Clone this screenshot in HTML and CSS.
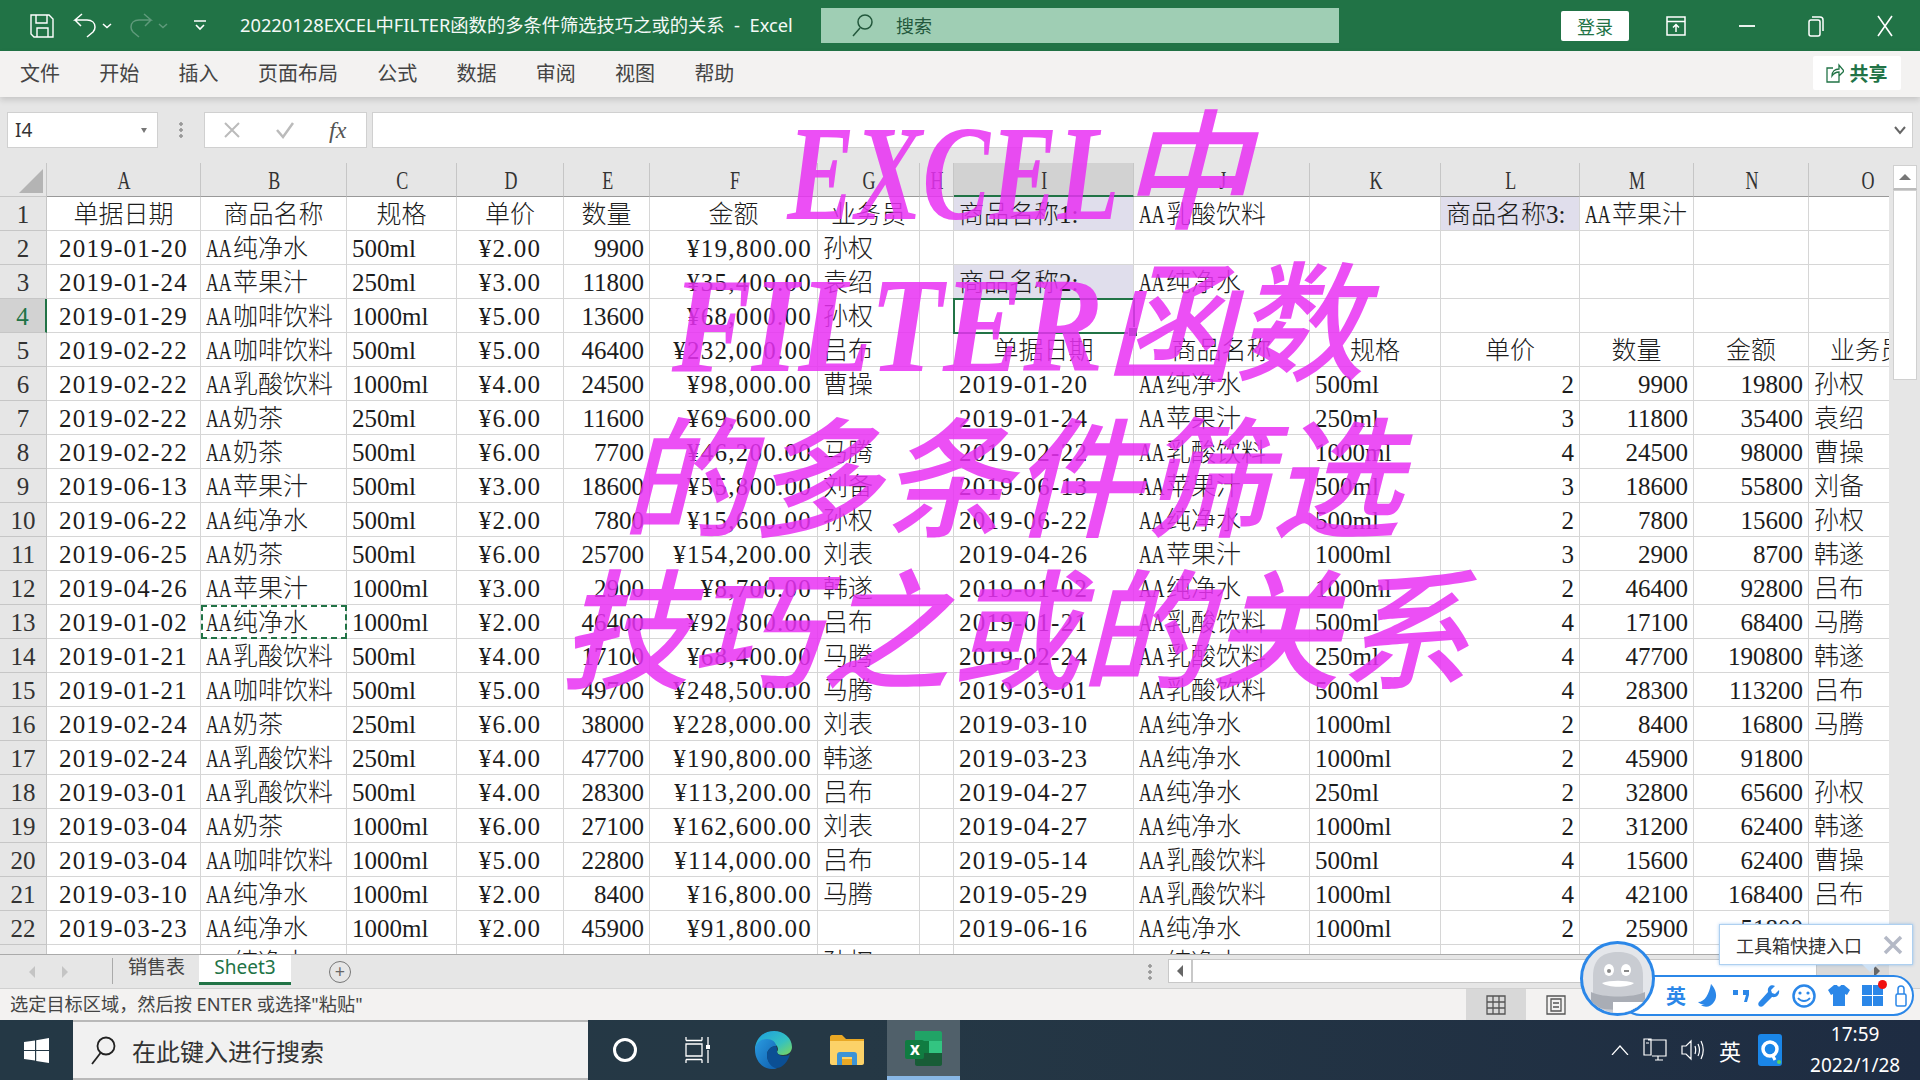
FILE: index.html
```html
<!DOCTYPE html>
<html lang="zh-CN">

<head>
    <meta charset="UTF-8">
    <title>20220128EXCEL中FILTER函数的多条件筛选技巧之或的关系 - Excel</title>
    <link rel="stylesheet" href="styles.css">
</head>

<body>

    <!-- Title bar -->
    <header class="titlebar">
        <div class="quick-access">
            <svg class="qa-save" width="24" height="24" viewBox="0 0 24 24" fill="none" stroke="#fff" stroke-width="1.4"><path d="M1 1h18l4 4v18H4l-3-3z"/><path d="M6 1v8h11V1M7 23v-9h11v9"/></svg>
            <svg class="qa-undo" width="24" height="25" viewBox="0 0 24 25" fill="none" stroke="#fff" stroke-width="1.5"><path d="M9 1 2 7h12c5 0 8 3 8 7 0 2-1 4-2 5l-6 5M2 7l6 6"/></svg>
            <svg class="qa-chev" width="10" height="6" viewBox="0 0 10 6" fill="none" stroke="#fff" stroke-width="1.5"><path d="M1 1l4 3.500 4-3.500"/></svg>
            <svg class="qa-redo" width="24" height="25" viewBox="0 0 24 25" fill="none" stroke="#5f9a7b" stroke-width="1.500"><path d="M15 1l7 6H10C5 7 2 10 2 14c0 2 1 4 2 5l6 5M22 7l-6 6"/></svg>
            <svg class="qa-chev" width="10" height="6" viewBox="0 0 10 6" fill="none" stroke="#5f9a7b" stroke-width="1.5"><path d="M1 1l4 3.500 4-3.500"/></svg>
            <svg class="qa-more" width="14" height="12" viewBox="0 0 14 12" fill="none" stroke="#fff" stroke-width="1.6"><path d="M1 1h12M3 5l4 4 4-4"/></svg>
        </div>
        <div class="doc-title">20220128EXCEL中FILTER函数的多条件筛选技巧之或的关系&nbsp; -&nbsp; Excel</div>
        <div class="search-box">
            <svg width="22" height="24" viewBox="0 0 22 24" fill="none" stroke="#23583c" stroke-width="1.5"><circle cx="14" cy="9" r="7"/><path d="M9 15 2 23"/></svg>
            <span>搜索</span>
        </div>
        <button class="login-btn">登录</button>
        <div class="window-btns">
            <svg width="20" height="20" viewBox="0 0 20 20" fill="none" stroke="#fff" stroke-width="1.500"><path d="M1 1h18v18H1zM1 5.500h18M10 16V9M7 11.500l3-3 3 3"/></svg>
            <svg width="16" height="20" viewBox="0 0 16 20" fill="none" stroke="#fff" stroke-width="1.800"><path d="M0 10h16"/></svg>
            <svg width="16" height="22" viewBox="0 0 16 22" fill="none" stroke="#fff" stroke-width="1.500"><rect x="1" y="5" width="11" height="16" rx="2"/><path d="M4 2h8c2 0 3 1 3 3v11"/></svg>
            <svg width="16" height="22" viewBox="0 0 16 22" fill="none" stroke="#fff" stroke-width="1.600"><path d="M1 1l14 20M15 1 1 21"/></svg>
        </div>
    </header>

    <!-- Ribbon tabs -->
    <nav class="ribbon">
        <a>文件</a>
        <a>开始</a>
        <a>插入</a>
        <a>页面布局</a>
        <a>公式</a>
        <a>数据</a>
        <a>审阅</a>
        <a>视图</a>
        <a>帮助</a>
        <button class="share-btn">
            <svg width="18" height="20" viewBox="0 0 18 20" fill="none" stroke="#217346" stroke-width="1.300"><path d="M7 5H1v14h12v-6M6 13c0-5 3-7 7-7V2l5 6-5 5V9c-3 0-5 1-7 4z"/></svg>
            共享
        </button>
    </nav>

    <!-- Formula bar -->
    <div class="formula-bar">
        <div class="name-box">I4<span class="name-arrow"></span></div>
        <div class="grip"></div>
        <div class="fx-box">
            <svg width="18" height="18" viewBox="0 0 18 18" fill="none" stroke="#bbb" stroke-width="2"><path d="M2 2l14 14M16 2 2 16"/></svg>
            <svg width="20" height="18" viewBox="0 0 20 18" fill="none" stroke="#bbb" stroke-width="2.500"><path d="M2 9l6 7L18 2"/></svg>
            <span class="fx-label">fx</span>
        </div>
        <div class="formula-input">
            <svg width="12" height="10" viewBox="0 0 12 10" fill="none" stroke="#666" stroke-width="2"><path d="M1 2l5 6 5-6"/></svg>
        </div>
    </div>

    <!-- Sheet grid -->
    <main class="sheet">
        <div class="grid-wrap">
            <table class="grid">
                <colgroup>
                    <col class="w-head"><col class="w-a"><col class="w-b"><col class="w-c"><col class="w-d"><col class="w-e"><col class="w-f"><col class="w-g"><col class="w-h"><col class="w-i"><col class="w-j"><col class="w-k"><col class="w-l"><col class="w-m"><col class="w-n"><col class="w-o">
                </colgroup>
                <thead id="gridHead"></thead>
                <tbody id="gridBody"></tbody>
            </table>
        </div>
        <div class="v-scroll">
            <div class="v-up"><span></span></div>
            <div class="v-thumb"></div>
        </div>
    </main>

    <!-- Sheet tabs and horizontal scrollbar -->
    <div class="tabs-bar">
        <span class="tab-nav tab-nav-left"></span>
        <span class="tab-nav tab-nav-right"></span>
        <span class="tab-sep"></span>
        <span class="tab">销售表</span>
        <span class="tab tab-active">Sheet3</span>
        <span class="tab-add">+</span>
        <span class="h-grip"></span>
        <div class="h-scroll">
            <span class="h-left"><i></i></span>
            <span class="h-thumb"></span>
            <span class="h-right"><i></i></span>
        </div>
    </div>

    <!-- Status bar -->
    <div class="status-bar">
        <span class="status-text">选定目标区域，然后按 ENTER 或选择"粘贴"</span>
        <div class="view-btns">
            <span class="view-btn view-active">
                <svg width="20" height="20" viewBox="0 0 20 20" fill="none" stroke="#555" stroke-width="1.300"><path d="M1 1h18v18H1zM7 1v18M13 1v18M1 7h18M1 13h18"/></svg>
            </span>
            <span class="view-btn">
                <svg width="20" height="20" viewBox="0 0 20 20" fill="none" stroke="#555" stroke-width="1.300"><path d="M1 1h18v18H1zM5 4h10v12H5zM7 8h6M7 12h6"/></svg>
            </span>
        </div>
    </div>

    <!-- Taskbar -->
    <footer class="taskbar">
        <div class="start-btn">
            <svg width="25" height="25" viewBox="0 0 25 25" fill="#fff"><path d="M0 4l11-1.500V12H0zM12.200 2.300 25 0v12H12.200zM0 13h11v9.500L0 21zM12.200 13H25v12l-12.800-2z"/></svg>
        </div>
        <div class="task-search">
            <svg width="26" height="30" viewBox="0 0 26 30" fill="none" stroke="#222" stroke-width="1.800"><circle cx="16" cy="11" r="8.500"/><path d="M10.500 18 2 29"/></svg>
            <span>在此键入进行搜索</span>
        </div>
        <div class="task-icons">
            <span class="task-icon">
                <svg width="26" height="26" viewBox="0 0 26 26" fill="none" stroke="#fff" stroke-width="3"><circle cx="13" cy="13" r="10.500"/></svg>
            </span>
            <span class="task-icon">
                <svg width="28" height="26" viewBox="0 0 28 26" fill="none" stroke="#fff" stroke-width="1.300"><path d="M1 3.500h16M1 0v3.500M17 0v3.500M1 7h16v12H1zM1 22.500h16M1 26v-3.500M17 26v-3.500M23 0v9M23 13v13"/><rect x="21" y="8" width="4" height="4" fill="#fff" stroke="none"/></svg>
            </span>
            <span class="task-icon">
                <svg width="38" height="38" viewBox="0 0 38 38">
                    <defs>
                        <linearGradient id="edgeTop" x1="0" y1="0" x2="1" y2="1"><stop offset="0" stop-color="#1b9de2"/><stop offset=".6" stop-color="#35c1c0"/><stop offset="1" stop-color="#7fd858"/></linearGradient>
                        <linearGradient id="edgeLow" x1="0" y1="0" x2="1" y2="1"><stop offset="0" stop-color="#2a9be0"/><stop offset="1" stop-color="#0f5fae"/></linearGradient>
                    </defs>
                    <path d="M1 19C1 8 9 0 20 0c10 0 18 7 18 16 0 5-4 8-9 8-4 0-6-1-6-3 0-1 1-1 1-3 0-3-3-6-8-6-9 0-15 7-15 7z" fill="url(#edgeTop)"/>
                    <path d="M1 19c0-6 5-11 12-11 5 0 9 3 9 7-5 0-9 4-9 9 0 6 4 11 10 13-1 1-3 1-5 1C8 38 1 29 1 19z" fill="url(#edgeLow)"/>
                    <path d="M13 24c0-5 4-9 9-9 1 2 1 3 1 5 0 3 3 5 7 5 3 0 5-1 6-2-2 8-8 15-15 14C16 35 13 30 13 24z" fill="#0b4f94"/>
                </svg>
            </span>
            <span class="task-icon">
                <svg width="34" height="30" viewBox="0 0 34 30">
                    <path d="M0 2c0-1 1-2 2-2h10l4 4h18v8H0z" fill="#e9a825"/>
                    <path d="M0 6h34v22c0 1-1 2-2 2H2c-1 0-2-1-2-2z" fill="#fcd268"/>
                    <path d="M7 30v-10c0-2 1-3 3-3h14c2 0 3 1 3 3v10h-5v-8H12v8z" fill="#3c93d6"/>
                    <rect x="12" y="24" width="10" height="6" fill="#e9a825"/>
                </svg>
            </span>
            <span class="task-icon task-icon-open">
                <svg width="37" height="35" viewBox="0 0 37 35">
                    <path d="M10 0h25c1 0 2 1 2 2v8H10z" fill="#21a366"/>
                    <path d="M10 10h14v12H10z" fill="#107c41"/>
                    <path d="M24 10h13v12H24z" fill="#33c481"/>
                    <path d="M10 22h27v11c0 1-1 2-2 2H12c-1 0-2-1-2-2z" fill="#185c37"/>
                    <rect y="9" width="19" height="19" rx="2" fill="#107c41"/>
                    <text x="5" y="24" class="xl-letter">x</text>
                </svg>
            </span>
        </div>
        <div class="tray">
            <svg width="18" height="10" viewBox="0 0 18 10" fill="none" stroke="#fff" stroke-width="1.200"><path d="M1 10 9 1l8 9"/></svg>
            <svg width="24" height="24" viewBox="0 0 24 24" fill="none" stroke="#fff" stroke-width="1.200"><path d="M5 2h18v16H9M1 1h7v16H1zM3 5h3M12 22h8M15 18v4"/></svg>
            <svg width="24" height="24" viewBox="0 0 24 24" fill="none" stroke="#fff" stroke-width="1.200"><path d="M1 8h4l5-5v18l-5-5H1zM14 8c1 3 1 5 0 8M17 6c2 4 2 8 0 12M20 3c3 6 3 12 0 18"/></svg>
            <span class="tray-lang">英</span>
            <svg class="tray-q" width="24" height="32" viewBox="0 0 24 32"><rect width="24" height="32" rx="3" fill="#1a86e8"/><circle cx="12" cy="15" r="7" fill="none" stroke="#fff" stroke-width="3.500"/><path d="M14 20l3 6" stroke="#fff" stroke-width="3"/><circle cx="21" cy="28" r="2" fill="#5fd35f"/></svg>
            <div class="clock"><span>17:59</span><span>2022/1/28</span></div>
        </div>
    </footer>

    <!-- Cover caption over the sheet -->
    <div class="banner">
        <div class="banner-line line-one"><span class="latin latin-excel">EXCEL</span>中</div>
        <div class="banner-line line-two"><span class="latin latin-filter">FILTER</span>函数</div>
        <div class="banner-line line-three">的多条件筛选</div>
        <div class="banner-line line-four">技巧之或的关系</div>
    </div>

    <!-- Input method toolbar -->
    <div class="ime-tip">
        <span>工具箱快捷入口</span>
        <svg width="20" height="20" viewBox="0 0 20 20" fill="none" stroke="#b4b9c6" stroke-width="3.500"><path d="M2 2l16 16M18 2 2 18"/></svg>
        <i class="ime-tip-arrow"></i>
    </div>
    <div class="ime-bar">
        <b>英</b>
        <svg width="20" height="24" viewBox="0 0 20 24" fill="#2b87e8"><path d="M13 0c3 6 1 18-5 20-3 1-6 0-8-2 7 0 11-8 13-18z"/><path d="M13 0c5 5 7 13 3 18-3 5-9 6-13 3 7 0 12-10 10-21z"/></svg>
        <svg class="ime-quote" width="16" height="14" viewBox="0 0 16 14" fill="#2b87e8"><rect y="1" width="5" height="5"/><path d="M10 1h6v5l-2 7h-3l2-7h-3z"/></svg>
        <svg width="22" height="22" viewBox="0 0 22 22" fill="#2b87e8"><path d="M21 5l-4 4-3-1-1-3 4-4c-4-2-8 1-7 6L1 17c-1 1-1 3 0 4s3 1 4 0l9-9c5 1 8-3 7-7z"/></svg>
        <svg width="24" height="24" viewBox="0 0 24 24" fill="none" stroke="#2b87e8" stroke-width="2.500"><circle cx="12" cy="12" r="10.500"/><path d="M6 14c3 4 9 4 12 0" stroke-width="1.800"/><circle cx="8" cy="9" r="1.600" fill="#2b87e8" stroke="none"/><circle cx="16" cy="9" r="1.600" fill="#2b87e8" stroke="none"/></svg>
        <svg width="22" height="21" viewBox="0 0 22 21" fill="#2b87e8"><path d="M6 0h3c1 2 3 2 4 0h3l6 5-3 5-2-1v12H5V9l-2 1-3-5z"/></svg>
        <svg width="21" height="21" viewBox="0 0 21 21" fill="#2b87e8"><path d="M0 0h10v10H0zM11 0h10v10H11zM0 11h10v10H0zM11 11h10v10H11z"/></svg>
        <svg width="12" height="22" viewBox="0 0 12 22" fill="none" stroke="#2b87e8" stroke-width="1.500"><rect x="1" y="9" width="10" height="12" rx="1.500"/><path d="M3 9V4c0-4 6-4 6 0v5"/></svg>
        <i class="ime-dot"></i>
    </div>
    <div class="ime-avatar">
        <svg width="70" height="70" viewBox="0 0 70 70">
            <path d="M10 70V32C10 14 21 8 35 8s25 6 25 24v38z" fill="#c9ccd2"/>
            <path d="M8 48c12 6 42 6 54 0v14c-12 5-42 5-54 0z" fill="#a9adb5"/>
            <rect x="30" y="58" width="30" height="12" fill="#fff"/>
            <ellipse cx="26" cy="26" rx="5" ry="6" fill="#fff"/>
            <ellipse cx="43" cy="26" rx="5" ry="6" fill="#fff"/>
            <circle cx="26" cy="27" r="2" fill="#888"/>
            <path d="M41 27h5" stroke="#888" stroke-width="2"/>
            <path d="M19 39c8-3 24-3 32 0-6 5-26 5-32 0z" fill="#fff"/>
        </svg>
    </div>

    <script>
        // Sheet contents, one row per line, columns A to O split by "|"
        const sheetRows = [
            "单据日期|商品名称|规格|单价|数量|金额|业务员||商品名称1:|AA乳酸饮料||商品名称3:|AA苹果汁||",
            "2019-01-20|AA纯净水|500ml|¥2.00|9900|¥19,800.00|孙权||||||||",
            "2019-01-24|AA苹果汁|250ml|¥3.00|11800|¥35,400.00|袁绍||商品名称2:|AA纯净水|||||",
            "2019-01-29|AA咖啡饮料|1000ml|¥5.00|13600|¥68,000.00|孙权||||||||",
            "2019-02-22|AA咖啡饮料|500ml|¥5.00|46400|¥232,000.00|吕布||单据日期|商品名称|规格|单价|数量|金额|业务员",
            "2019-02-22|AA乳酸饮料|1000ml|¥4.00|24500|¥98,000.00|曹操||2019-01-20|AA纯净水|500ml|2|9900|19800|孙权",
            "2019-02-22|AA奶茶|250ml|¥6.00|11600|¥69,600.00|||2019-01-24|AA苹果汁|250ml|3|11800|35400|袁绍",
            "2019-02-22|AA奶茶|500ml|¥6.00|7700|¥46,200.00|马腾||2019-02-22|AA乳酸饮料|1000ml|4|24500|98000|曹操",
            "2019-06-13|AA苹果汁|500ml|¥3.00|18600|¥55,800.00|刘备||2019-06-13|AA苹果汁|500ml|3|18600|55800|刘备",
            "2019-06-22|AA纯净水|500ml|¥2.00|7800|¥15,600.00|孙权||2019-06-22|AA纯净水|500ml|2|7800|15600|孙权",
            "2019-06-25|AA奶茶|500ml|¥6.00|25700|¥154,200.00|刘表||2019-04-26|AA苹果汁|1000ml|3|2900|8700|韩遂",
            "2019-04-26|AA苹果汁|1000ml|¥3.00|2900|¥8,700.00|韩遂||2019-01-02|AA纯净水|1000ml|2|46400|92800|吕布",
            "2019-01-02|AA纯净水|1000ml|¥2.00|46400|¥92,800.00|吕布||2019-01-21|AA乳酸饮料|500ml|4|17100|68400|马腾",
            "2019-01-21|AA乳酸饮料|500ml|¥4.00|17100|¥68,400.00|马腾||2019-02-24|AA乳酸饮料|250ml|4|47700|190800|韩遂",
            "2019-01-21|AA咖啡饮料|500ml|¥5.00|49700|¥248,500.00|马腾||2019-03-01|AA乳酸饮料|500ml|4|28300|113200|吕布",
            "2019-02-24|AA奶茶|250ml|¥6.00|38000|¥228,000.00|刘表||2019-03-10|AA纯净水|1000ml|2|8400|16800|马腾",
            "2019-02-24|AA乳酸饮料|250ml|¥4.00|47700|¥190,800.00|韩遂||2019-03-23|AA纯净水|1000ml|2|45900|91800|",
            "2019-03-01|AA乳酸饮料|500ml|¥4.00|28300|¥113,200.00|吕布||2019-04-27|AA纯净水|250ml|2|32800|65600|孙权",
            "2019-03-04|AA奶茶|1000ml|¥6.00|27100|¥162,600.00|刘表||2019-04-27|AA纯净水|1000ml|2|31200|62400|韩遂",
            "2019-03-04|AA咖啡饮料|1000ml|¥5.00|22800|¥114,000.00|吕布||2019-05-14|AA乳酸饮料|500ml|4|15600|62400|曹操",
            "2019-03-10|AA纯净水|1000ml|¥2.00|8400|¥16,800.00|马腾||2019-05-29|AA乳酸饮料|1000ml|4|42100|168400|吕布",
            "2019-03-23|AA纯净水|1000ml|¥2.00|45900|¥91,800.00|||2019-06-16|AA纯净水|1000ml|2|25900|51800|",
            "2019-04-27|AA纯净水|250ml|¥2.00|32800|¥65,600.00|孙权||2019-06-27|AA纯净水|250ml|2|32800|65600|孙权"
        ];

        // Default alignment of each column
        const columnAlign = ['center', 'left', 'left', 'center', 'right', 'right', 'left', 'left',
            'left', 'left', 'left', 'right', 'right', 'right', 'left'];
        const letters = 'ABCDEFGHIJKLMNO';

        // Column headers
        const headRow = document.createElement('tr');
        headRow.appendChild(document.createElement('th')).className = 'corner';
        for (const letter of letters) {
            const th = document.createElement('th');
            th.className = letter === 'I' ? 'col-head active-col' : 'col-head';
            const span = document.createElement('span');
            span.textContent = letter;
            th.appendChild(span);
            headRow.appendChild(th);
        }
        document.getElementById('gridHead').appendChild(headRow);

        // Fill a cell, narrowing the "AA" prefix to the width of one full-width character
        function fillCell(td, text) {
            if (text.startsWith('AA')) {
                const prefix = document.createElement('span');
                prefix.className = 'prefix';
                prefix.textContent = 'AA';
                td.appendChild(prefix);
                td.appendChild(document.createTextNode(text.slice(2)));
            } else {
                td.textContent = text;
            }
            if (/^\d{4}-|^¥/.test(text)) td.classList.add('spaced');
        }

        const gridBody = document.getElementById('gridBody');
        sheetRows.forEach((line, r) => {
            const row = document.createElement('tr');
            const number = r + 1;

            const head = document.createElement('th');
            head.className = number === 4 ? 'row-head active-row' : 'row-head';
            head.textContent = number;
            row.appendChild(head);

            line.split('|').forEach((text, c) => {
                const td = document.createElement('td');
                td.className = columnAlign[c];
                // Heading rows are centred, the criteria block in row 1 stays left
                if ((number === 1 && c < 7) || (number === 5 && c > 7)) td.className = 'center';
                if (number === 1 && c > 7) td.className = 'left';
                if (text.startsWith('商品名称') && text.length > 4) td.classList.add('label');
                fillCell(td, text);
                if (number === 4 && c === 8) td.classList.add('selected');
                if (number === 13 && c === 1) td.classList.add('copied');
                row.appendChild(td);
            });
            gridBody.appendChild(row);
        });
    </script>

</body>

</html>
```

FILE: styles.css
```css
/* General Reset */
* {
    margin: 0;
    padding: 0;
    box-sizing: border-box;
}

body {
    position: relative;
    width: 1920px;
    height: 1080px;
    overflow: hidden;
    display: flex;
    flex-direction: column;
    font-family: "Noto Sans", "Noto Sans CJK SC", sans-serif;
    background: #e6e6e6;
    color: #333;
}

/* Title bar */
.titlebar {
    height: 51px;
    flex: none;
    display: flex;
    align-items: center;
    background: #217346;
    color: #fff;
}

.quick-access {
    width: 240px;
    flex: none;
    display: flex;
    align-items: center;
    padding-left: 30px;
}

.qa-undo { margin-left: 19px; }
.qa-chev { margin-left: 5px; }
.qa-redo { margin-left: 17px; }
.qa-more { margin-left: 25px; }

.doc-title {
    width: 581px;
    flex: none;
    padding-bottom: 4px;
    font-size: 18.300px;
    white-space: nowrap;
    color: #f4f9f6;
}

.search-box {
    width: 518px;
    height: 35px;
    flex: none;
    display: flex;
    align-items: center;
    gap: 23px;
    padding: 0 0 2px 30px;
    background: #9fceb4;
    color: #23583c;
    font-size: 18px;
}

.login-btn {
    width: 68px;
    height: 30px;
    margin-left: 222px;
    flex: none;
    border: none;
    border-radius: 2px;
    background: #fff;
    color: #217346;
    font-family: inherit;
    font-size: 18px;
}

.window-btns {
    flex: 1;
    display: flex;
    align-items: center;
    justify-content: space-between;
    padding: 0 27px 0 37px;
}

/* Ribbon tabs */
.ribbon {
    height: 46px;
    flex: none;
    position: relative;
    z-index: 1;
    display: flex;
    align-items: center;
    gap: 39.300px;
    padding: 0 0 4px 20px;
    background: #f3f2f1;
    box-shadow: 0 3px 6px rgba(0, 0, 0, 0.14);
    font-size: 20px;
    color: #444;
}

.share-btn {
    position: absolute;
    top: 5px;
    right: 19px;
    width: 88px;
    height: 34px;
    display: flex;
    align-items: center;
    justify-content: center;
    gap: 5px;
    border: none;
    border-radius: 2px;
    background: #fff;
    color: #217346;
    font-family: inherit;
    font-size: 19px;
    font-weight: 700;
}

/* Formula bar */
.formula-bar {
    height: 66px;
    flex: none;
    display: flex;
    align-items: flex-start;
    padding: 15px 7px 0 7px;
    background: #e6e6e6;
}

.name-box,
.fx-box,
.formula-input {
    height: 36px;
    background: #fff;
    border: 1px solid #d0d0d0;
}

.name-box {
    position: relative;
    width: 151px;
    padding-left: 7px;
    font-size: 19px;
    line-height: 34px;
}

.name-arrow {
    position: absolute;
    right: 10px;
    top: 15px;
    border-top: 5px solid #777;
    border-left: 3.500px solid transparent;
    border-right: 3.500px solid transparent;
}

.grip {
    width: 46px;
    height: 18px;
    margin-top: 9px;
    background: radial-gradient(circle, #999 1.500px, transparent 2px) center top / 4px 6px repeat-y;
}

.fx-box {
    width: 163px;
    display: flex;
    align-items: center;
    gap: 34px;
    padding-left: 18px;
}

.fx-label {
    font-family: "Liberation Serif", serif;
    font-style: italic;
    font-size: 24px;
    color: #555;
}

.formula-input {
    flex: 1;
    margin-left: 5px;
    display: flex;
    align-items: center;
    justify-content: flex-end;
    padding-right: 6px;
}

/* Sheet grid */
.sheet {
    flex: 1;
    min-height: 0;
    display: flex;
}

.grid-wrap {
    width: 1889px;
    flex: none;
    overflow: hidden;
    position: relative;
    border-bottom: 1px solid #aaa;
    background: #fff;
}

.grid {
    width: 1927px;
    table-layout: fixed;
    border-collapse: separate;
    border-spacing: 0;
    font-family: "Liberation Serif", "Noto Sans CJK SC", serif;
    font-size: 25px;
    font-weight: 300;
    color: #1c1c1c;
}

.w-head { width: 47px; }
.w-a { width: 154px; }
.w-b { width: 146px; }
.w-c { width: 110px; }
.w-d { width: 107px; }
.w-e { width: 86px; }
.w-f { width: 168px; }
.w-g { width: 102px; }
.w-h { width: 34px; }
.w-i { width: 180px; }
.w-j { width: 176px; }
.w-k { width: 131px; }
.w-l { width: 139px; }
.w-m { width: 114px; }
.w-n { width: 115px; }
.w-o { width: 118px; }

.grid tr {
    height: 34px;
}

.grid th {
    font-weight: 400;
    background: #e6e6e6;
    color: #333;
    border-right: 1px solid #c6c6c6;
    border-bottom: 1px solid #c6c6c6;
}

.grid td {
    height: 34px;
    padding: 3px 5px 0;
    overflow: hidden;
    white-space: nowrap;
    line-height: 30px;
    border-right: 1px solid #d6d6d6;
    border-bottom: 1px solid #d6d6d6;
}

.corner {
    position: relative;
}

.corner::after {
    content: "";
    position: absolute;
    right: 3px;
    bottom: 3px;
    border-left: 24px solid transparent;
    border-bottom: 24px solid #b4b4b4;
}

.col-head {
    height: 34px;
    padding: 3px 0 0 2px;
    border-bottom-color: #999 !important;
}

.col-head span {
    display: inline-block;
    transform: scaleX(0.72);
}

.active-col {
    background: #d2d2d2 !important;
    border-bottom: 2px solid #217346 !important;
}

.row-head {
    padding-top: 3px;
    line-height: 30px;
}

.active-row {
    background: #d2d2d2 !important;
    color: #217346 !important;
    border-right: 2px solid #217346 !important;
}

.left { text-align: left; }
.center { text-align: center; }
.right { text-align: right; }

.grid td.spaced {
    letter-spacing: 1.250px;
}

.prefix {
    display: inline-block;
    width: 25px;
    transform: scaleX(0.7);
    transform-origin: left center;
    margin-right: 2px;
}

.label {
    background: #e0deec;
}

.grid td.selected {
    position: relative;
    overflow: visible;
    outline: 2px solid #217346;
    outline-offset: -1px;
}

td.selected::after {
    content: "";
    position: absolute;
    right: -5px;
    bottom: -5px;
    width: 8px;
    height: 8px;
    background: #217346;
    border: 1px solid #fff;
}

td.copied {
    outline: 2px dashed #217346;
    outline-offset: -2px;
}

/* Vertical scrollbar */
.v-scroll {
    flex: 1;
    padding: 2px 3px 0 4px;
    background: #e6e6e6;
}

.v-up {
    height: 25px;
    display: flex;
    align-items: center;
    justify-content: center;
    background: #fff;
    border: 1px solid #d0d0d0;
    border-bottom: 2px solid #bbb;
}

.v-up span {
    border-bottom: 6px solid #777;
    border-left: 6px solid transparent;
    border-right: 6px solid transparent;
}

.v-thumb {
    height: 190px;
    background: #fff;
    border: 1px solid #d0d0d0;
}

/* Sheet tabs */
.tabs-bar {
    height: 34px;
    flex: none;
    display: flex;
    align-items: flex-start;
    background: #e6e6e6;
    border-bottom: 1px solid #d0d0d0;
}

.tab-nav {
    width: 0;
    height: 0;
    margin-top: 11px;
    border-top: 6px solid transparent;
    border-bottom: 6px solid transparent;
}

.tab-nav-left {
    margin-left: 29px;
    border-right: 6px solid #c4c4c4;
}

.tab-nav-right {
    margin-left: 27px;
    border-left: 6px solid #c4c4c4;
}

.tab-sep {
    width: 1px;
    height: 26px;
    margin: 3px 12px 0 44px;
    background: #aaa;
}

.tab {
    height: 30px;
    padding: 0 14px 0 3px;
    font-size: 19px;
    line-height: 24px;
    color: #444;
}

.tab-active {
    width: 92px;
    padding: 0;
    text-align: center;
    background: #fff;
    color: #217346;
    border-bottom: 3px solid #217346;
}

.tab-add {
    width: 22px;
    height: 22px;
    margin: 6px 0 0 38px;
    border: 1.500px solid #777;
    border-radius: 50%;
    text-align: center;
    font-size: 18px;
    line-height: 18px;
    color: #666;
}

.h-grip {
    width: 6px;
    height: 18px;
    margin: 8px 0 0 796px;
    background: radial-gradient(circle, #999 1.500px, transparent 2px) center top / 4px 6px repeat-y;
}

.h-scroll {
    width: 721px;
    height: 24px;
    margin: 4px 0 0 15px;
    display: flex;
    background: #d9d9d9;
}

.h-left,
.h-right {
    width: 24px;
    display: flex;
    align-items: center;
    justify-content: center;
}

.h-left {
    background: #fff;
    border: 1px solid #c8c8c8;
}

.h-left i {
    border-right: 6px solid #666;
    border-top: 6px solid transparent;
    border-bottom: 6px solid transparent;
}

.h-thumb {
    width: 628px;
    background: #fff;
    border: 1px solid #c8c8c8;
}

.h-right {
    margin-left: 48px;
}

.h-right i {
    border-left: 6px solid #666;
    border-top: 6px solid transparent;
    border-bottom: 6px solid transparent;
}

/* Status bar */
.status-bar {
    height: 31px;
    flex: none;
    display: flex;
    align-items: center;
    justify-content: space-between;
    padding-left: 10px;
    background: #f3f2f1;
    font-size: 18.200px;
    color: #444;
}

.status-text {
    padding-bottom: 4px;
}

.view-btns {
    display: flex;
    margin-right: 334px;
}

.view-btn {
    width: 60px;
    height: 31px;
    display: flex;
    align-items: center;
    justify-content: center;
}

.view-active {
    background: #d8d8d8;
}

/* Taskbar */
.taskbar {
    height: 60px;
    flex: none;
    display: flex;
    align-items: center;
    background: linear-gradient(90deg, #243845 0%, #253845 45%, #1e2c42 100%);
    color: #fff;
}

.start-btn {
    width: 73px;
    display: flex;
    justify-content: center;
}

.task-search {
    width: 515px;
    height: 60px;
    display: flex;
    align-items: center;
    gap: 16px;
    padding-left: 17px;
    background: #f1f1f1;
    border: 2px solid #b9b9b9;
    border-left: none;
    border-right: none;
    color: #333;
    font-size: 24px;
}

.task-icons {
    display: flex;
    height: 60px;
}

.task-icon {
    width: 74px;
    display: flex;
    align-items: center;
    justify-content: center;
}

.task-icon-open {
    width: 73px;
    margin-left: 3px;
    background: #50606a;
    border-bottom: 4px solid #89b8e6;
}

.xl-letter {
    font-family: "Noto Sans", sans-serif;
    font-size: 17px;
    font-weight: 700;
    fill: #fff;
}

.tray {
    flex: 1;
    display: flex;
    align-items: center;
    padding-left: 651px;
    gap: 14px;
}

.tray-lang {
    font-size: 22px;
}

.tray-q {
    margin-left: 3px;
}

.clock {
    margin-left: 14px;
    display: flex;
    flex-direction: column;
    align-items: center;
    font-size: 19px;
    line-height: 31px;
    white-space: nowrap;
}

/* Cover caption */
.banner {
    position: absolute;
    top: 99px;
    left: 518px;
    width: 1000px;
    text-align: center;
    font-family: "Liberation Serif", "Noto Sans CJK SC", sans-serif;
    font-size: 130px;
    font-style: italic;
    font-weight: 500;
    line-height: 150px;
    color: #e931f4;
    opacity: 0.85;
    white-space: nowrap;
}

.banner-line {
    height: 152px;
}

.line-two {
    height: 157px;
}

.line-three {
    margin-left: -14px;
}

.line-four {
    margin-left: -6px;
}

.latin {
    display: inline-block;
    font-size: 135px;
    font-weight: 700;
}

.latin-excel {
    transform: scaleX(0.75);
    margin: 0 -55px;
}

.latin-filter {
    transform: scaleX(0.89);
    margin: 0 -26px;
}

/* Input method toolbar */
.ime-bar {
    position: absolute;
    top: 975px;
    left: 1620px;
    width: 294px;
    height: 41px;
    display: flex;
    align-items: center;
    gap: 12px;
    padding-left: 44px;
    background: #fff;
    border: 2px solid #2b87e8;
    border-radius: 21px;
}

.ime-bar b {
    font-size: 20px;
    color: #2b87e8;
}

.ime-quote {
    margin: 0 -3px 0 3px;
}

.ime-dot {
    position: absolute;
    top: 3px;
    right: 25px;
    width: 9px;
    height: 9px;
    border-radius: 50%;
    background: #f01010;
}

.ime-avatar {
    position: absolute;
    top: 941px;
    left: 1580px;
    width: 75px;
    height: 75px;
    overflow: hidden;
    background: #e4e6ea;
    border: 3px solid #2b87e8;
    border-radius: 50%;
}

.ime-tip {
    position: absolute;
    top: 924px;
    left: 1719px;
    width: 194px;
    height: 41px;
    display: flex;
    align-items: center;
    justify-content: space-between;
    padding: 0 9px 0 16px;
    background: #fff;
    border: 1px solid #aed0f0;
    box-shadow: 0 0 3px rgba(43, 135, 232, 0.4);
    font-size: 18px;
    color: #333;
}

.ime-tip-arrow {
    position: absolute;
    bottom: -8px;
    right: 34px;
    border-top: 8px solid #cfe2f5;
    border-left: 8px solid transparent;
    border-right: 8px solid transparent;
}
```
